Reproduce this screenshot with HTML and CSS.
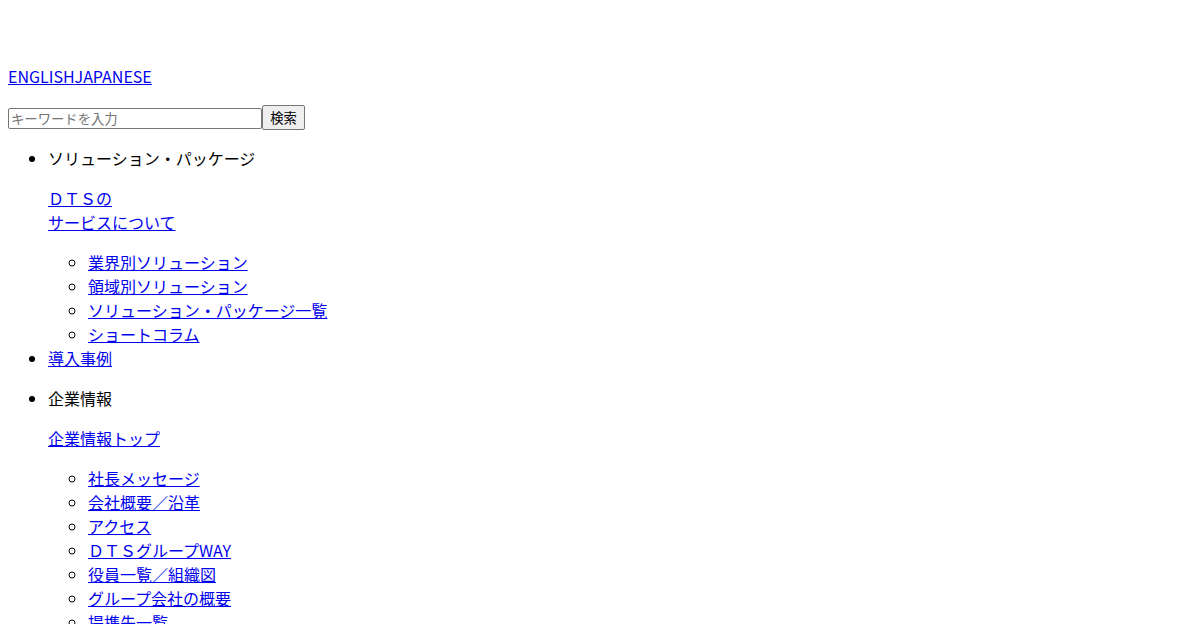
FILE: index.html
```html
<!DOCTYPE html>
<html lang="ja">
<head>
  <meta charset="UTF-8" />
  <meta name="viewport" content="width=device-width, initial-scale=1.0"/>
  <title>DTS</title>
  <link rel="stylesheet" href="styles.css">
</head>
<body>
  <header class="header">
    <div class="logo"></div>
    <p class="lang"><a href="#">ENGLISH</a><a href="#">JAPANESE</a></p>
    <form class="search" onsubmit="return false">
      <input type="text" class="search-input" placeholder="キーワードを入力"><button type="submit" class="search-btn">検索</button>
    </form>
  </header>

  <nav>
    <ul class="menu">
      <li>
        <p>ソリューション・パッケージ</p>
        <p><a href="#">ＤＴＳの<br>サービスについて</a></p>
        <ul>
          <li><a href="#">業界別ソリューション</a></li>
          <li><a href="#">領域別ソリューション</a></li>
          <li><a href="#">ソリューション・パッケージ一覧</a></li>
          <li><a href="#">ショートコラム</a></li>
        </ul>
      </li>
      <li><a href="#">導入事例</a></li>
      <li>
        <p>企業情報</p>
        <p><a href="#">企業情報トップ</a></p>
        <ul>
          <li><a href="#">社長メッセージ</a></li>
          <li><a href="#">会社概要／沿革</a></li>
          <li><a href="#">アクセス</a></li>
          <li><a href="#">ＤＴＳグループWAY</a></li>
          <li><a href="#">役員一覧／組織図</a></li>
          <li><a href="#">グループ会社の概要</a></li>
          <li><a href="#">提携先一覧</a></li>
        </ul>
      </li>
    </ul>
  </nav>
</body>
</html>
```

FILE: styles.css
```css
body {
  font-family: "Noto Sans CJK JP", "Noto Sans", sans-serif;
  font-size: 16px;
  line-height: 24px;
  color: #000;
}

a {
  color: #0000ee;
}

.logo {
  height: 40px;
}

.search {
  margin: 17px 0 15px;
}

.search-input {
  width: 254px;
  height: 21px;
  box-sizing: border-box;
  font-family: "Noto Sans CJK JP", sans-serif;
  font-size: 13.33px;
  padding: 1px 2px;
  border: 1px solid #767676;
  border-radius: 2px;
  vertical-align: bottom;
  margin: 0 0 1px;
}

.search-input::placeholder {
  color: #757575;
}

.search-btn {
  width: 43px;
  height: 25px;
  font-family: "Noto Sans CJK JP", sans-serif;
  font-size: 13.33px;
  padding: 0 6px;
  margin: 0;
  border: 1px solid #767676;
  border-radius: 2px;
  background-color: #efefef;
  color: #000;
  vertical-align: bottom;
}

.menu {
  margin-top: 15px;
}
```
